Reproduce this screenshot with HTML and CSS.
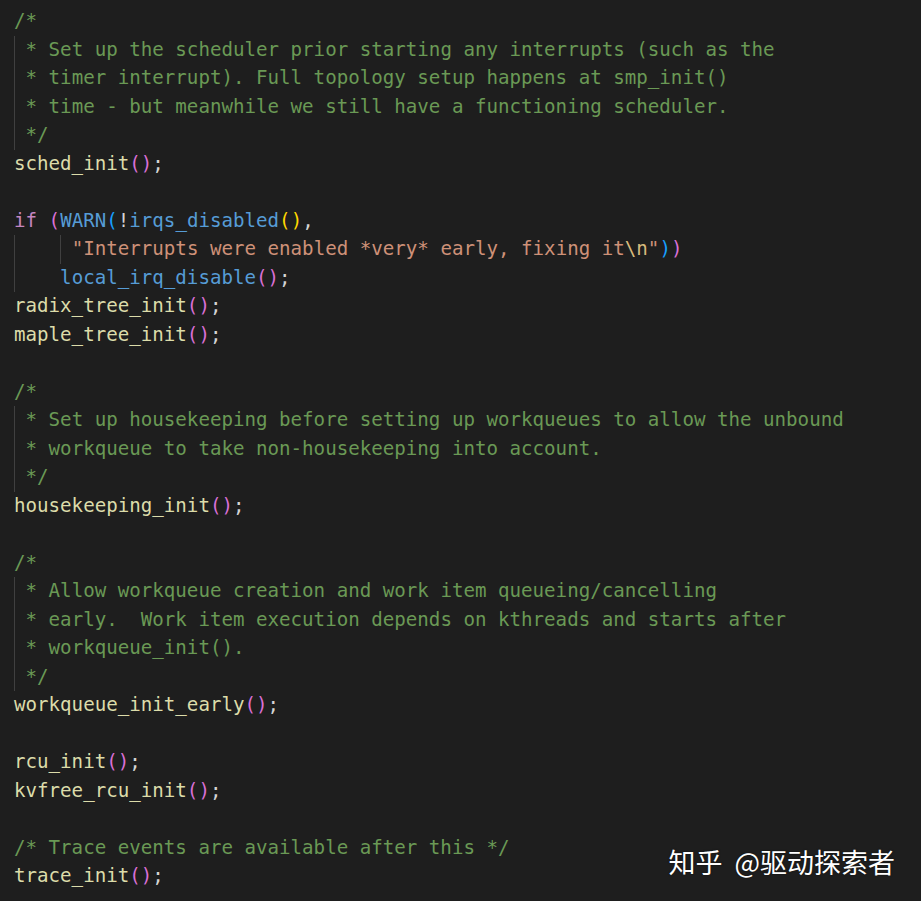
FILE: index.html
```html
<!DOCTYPE html>
<html lang="zh">
<head>
<meta charset="utf-8">
<title>init code</title>
<link rel="stylesheet" href="styles.css">
</head>
<body>
<div class="editor">
<div class="code">
<div class="line"><span class="c">/*</span></div>
<div class="line"><span class="g"> </span><span class="c">* Set up the scheduler prior starting any interrupts (such as the</span></div>
<div class="line"><span class="g"> </span><span class="c">* timer interrupt). Full topology setup happens at smp_init()</span></div>
<div class="line"><span class="g"> </span><span class="c">* time - but meanwhile we still have a functioning scheduler.</span></div>
<div class="line"><span class="g"> </span><span class="c">*/</span></div>
<div class="line"><span class="f">sched_init</span><span class="p1">()</span>;</div>
<div class="line"></div>
<div class="line"><span class="k">if</span> <span class="p1">(</span><span class="m">WARN</span><span class="p2">(</span>!<span class="m">irqs_disabled</span><span class="p3">()</span>,</div>
<div class="line"><span class="g">    </span><span class="g"> </span><span class="s">"Interrupts were enabled *very* early, fixing it<span class="e">\n</span>"</span><span class="p2">)</span><span class="p1">)</span></div>
<div class="line"><span class="g">    </span><span class="m">local_irq_disable</span><span class="p1">()</span>;</div>
<div class="line"><span class="f">radix_tree_init</span><span class="p1">()</span>;</div>
<div class="line"><span class="f">maple_tree_init</span><span class="p1">()</span>;</div>
<div class="line"></div>
<div class="line"><span class="c">/*</span></div>
<div class="line"><span class="g"> </span><span class="c">* Set up housekeeping before setting up workqueues to allow the unbound</span></div>
<div class="line"><span class="g"> </span><span class="c">* workqueue to take non-housekeeping into account.</span></div>
<div class="line"><span class="g"> </span><span class="c">*/</span></div>
<div class="line"><span class="f">housekeeping_init</span><span class="p1">()</span>;</div>
<div class="line"></div>
<div class="line"><span class="c">/*</span></div>
<div class="line"><span class="g"> </span><span class="c">* Allow workqueue creation and work item queueing/cancelling</span></div>
<div class="line"><span class="g"> </span><span class="c">* early.  Work item execution depends on kthreads and starts after</span></div>
<div class="line"><span class="g"> </span><span class="c">* workqueue_init().</span></div>
<div class="line"><span class="g"> </span><span class="c">*/</span></div>
<div class="line"><span class="f">workqueue_init_early</span><span class="p1">()</span>;</div>
<div class="line"></div>
<div class="line"><span class="f">rcu_init</span><span class="p1">()</span>;</div>
<div class="line"><span class="f">kvfree_rcu_init</span><span class="p1">()</span>;</div>
<div class="line"></div>
<div class="line"><span class="c">/* Trace events are available after this */</span></div>
<div class="line"><span class="f">trace_init</span><span class="p1">()</span>;</div>
</div>
<div class="watermark">知乎 @驱动探索者</div>
</div>
</body>
</html>
```

FILE: styles.css
```css
html, body {
  margin: 0;
  padding: 0;
  background: #1e1e1e;
}

.editor {
  position: relative;
  width: 921px;
  height: 901px;
  overflow: hidden;
  background: #1e1e1e;
}

.code {
  padding: 7px 0 0 14px;
  font-family: "DejaVu Sans Mono", "Liberation Mono", monospace;
  font-size: 19.15px;
  color: #d4d4d4;
}

.line {
  height: 28.53px;
  line-height: 28.53px;
  white-space: pre;
}

.g {
  display: inline-block;
  height: 28.53px;
  vertical-align: top;
  box-shadow: inset 1px 0 0 #404040;
}

.c { color: #6a9955; }
.f { color: #dcdcaa; }
.k { color: #c586c0; }
.m { color: #569cd6; }
.s { color: #ce9178; }
.e { color: #d7ba7d; }
.p1 { color: #da70d6; }
.p2 { color: #179fff; }
.p3 { color: #ffd700; }

.watermark {
  position: absolute;
  right: 26px;
  top: 842px;
  font-family: "Noto Sans CJK SC", "Noto Sans", sans-serif;
  font-size: 27px;
  line-height: 40px;
  word-spacing: 6px;
  color: #ffffff;
  text-shadow: 0 0 2px rgba(0, 0, 0, 0.6);
}
```
